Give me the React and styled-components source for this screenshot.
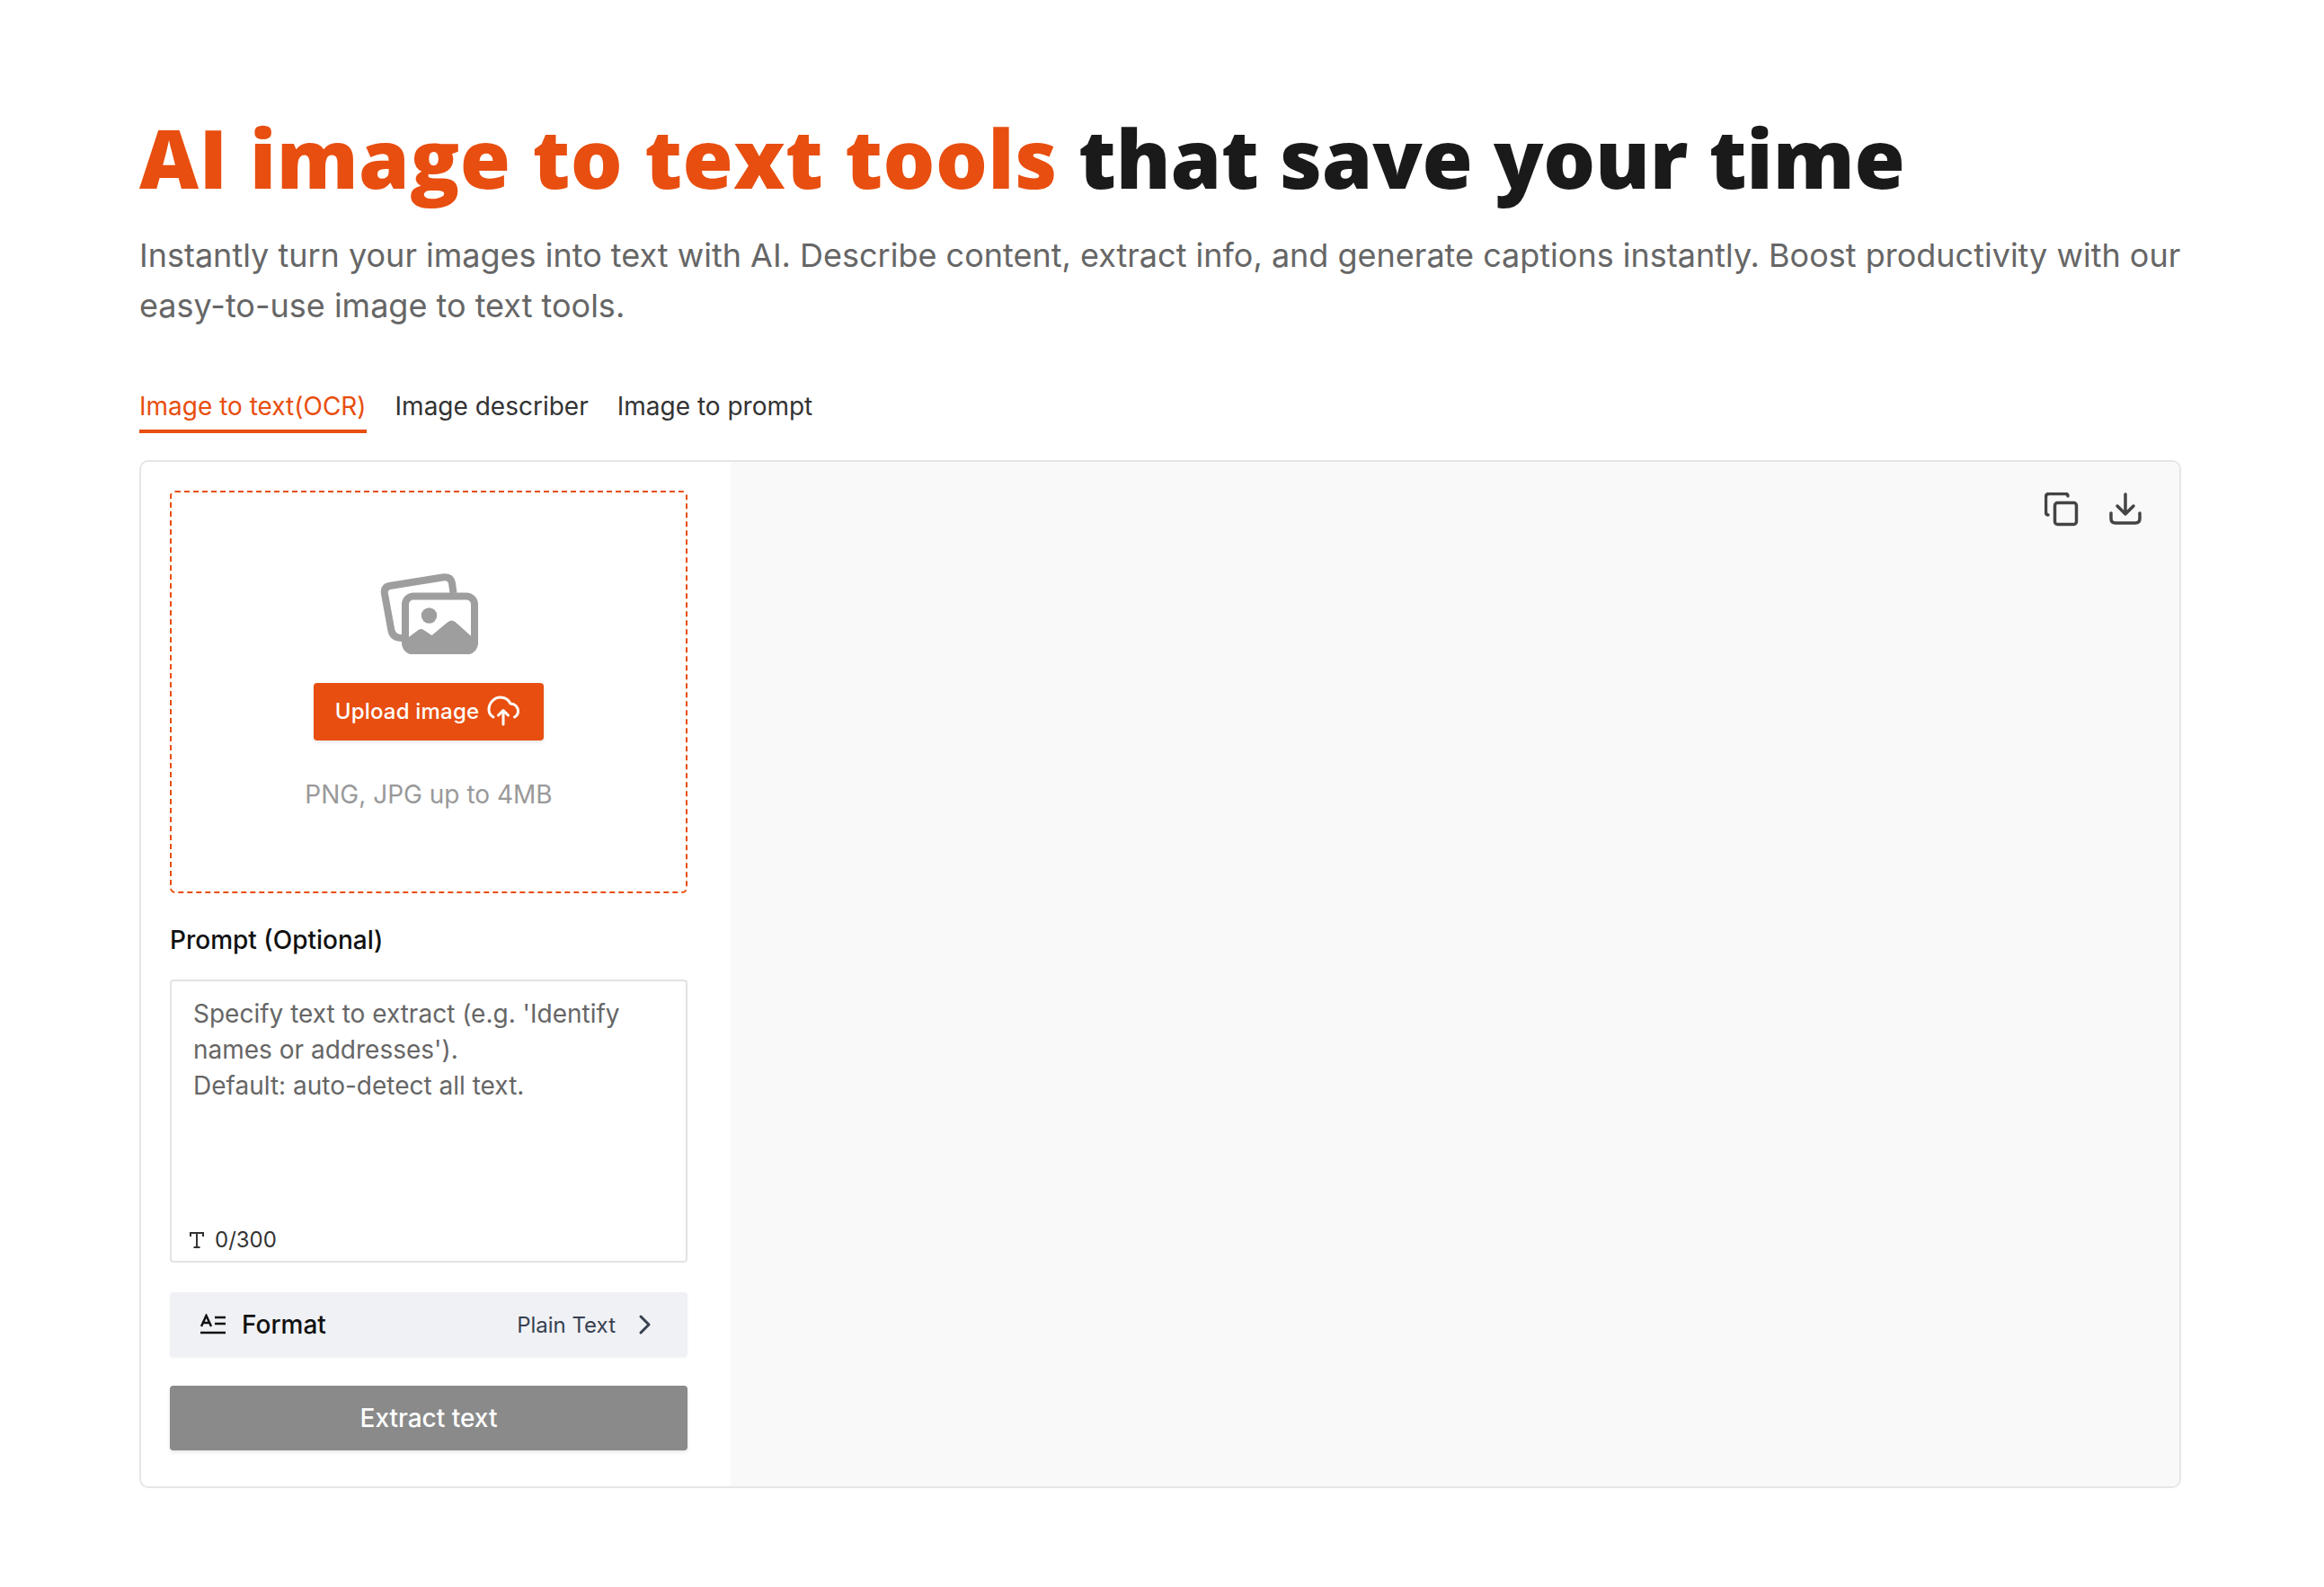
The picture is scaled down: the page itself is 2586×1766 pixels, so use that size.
import styled, { createGlobalStyle } from 'styled-components'

const orange = '#e84e0f'

const GlobalStyle = createGlobalStyle`
    * { box-sizing: border-box; }
    html, body { margin: 0; background: #fff; }
    body { font-family: Inter, "Liberation Sans", sans-serif; }
`

const Page = styled.main`
    padding: 123px 159px 0 155px;
`

const Title = styled.h1`
    margin: 0;
    font-family: "Open Sans", Inter, sans-serif;
    font-size: 91px;
    line-height: 105px;
    letter-spacing: -0.23px;
    font-weight: 800;
    color: #1a1a1a;
    white-space: nowrap;
`

const Accent = styled.span`
    letter-spacing: 0.42px;
    color: ${orange};
`

const Lead = styled.p`
    margin: 28px 0 0;
    font-size: 36px;
    line-height: 56px;
    color: #666;
`

const Tabs = styled.nav`
    display: flex;
    gap: 32px;
    margin-top: 63px;
`

const Tab = styled.button`
    padding: 0 0 5px;
    border: none;
    border-bottom: 4px solid ${(p) => (p.$active ? orange : 'transparent')};
    background: none;
    font-family: inherit;
    font-size: 28px;
    line-height: 42px;
    color: ${(p) => (p.$active ? orange : '#333')};
`

const Panel = styled.section`
    display: flex;
    height: 1144px;
    margin-top: 30px;
    border: 2px solid #e6e6e6;
    border-radius: 10px;
    overflow: hidden;
`

const Sidebar = styled.div`
    flex: 0 0 656px;
    display: flex;
    flex-direction: column;
    padding: 32px 48px 0 32px;
`

const DropZone = styled.div`
    height: 448px;
    display: flex;
    flex-direction: column;
    align-items: center;
    padding-top: 90px;
    border: 2px dashed ${orange};
    border-radius: 6px;
`

const UploadButton = styled.button`
    display: flex;
    align-items: center;
    justify-content: center;
    gap: 9px;
    width: 256px;
    height: 64px;
    margin-top: 32px;
    padding: 0 3px 2px 0;
    border: none;
    border-radius: 4px;
    background: ${orange};
    box-shadow: 0 2px 4px rgba(0, 0, 0, 0.1);
    font-family: inherit;
    font-size: 24px;
    letter-spacing: 0.2px;
    font-weight: 500;
    color: #fff;
`

const Hint = styled.div`
    margin-top: 40px;
    font-size: 28px;
    line-height: 40px;
    color: #999;
`

const Label = styled.label`
    margin-top: 32px;
    font-size: 28px;
    line-height: 40px;
    font-weight: 500;
    color: #111;
`

const PromptBox = styled.div`
    position: relative;
    height: 315px;
    margin-top: 24px;
    border: 2px solid #e3e3e3;
    border-radius: 4px;
`

const PromptInput = styled.textarea`
    display: block;
    width: 100%;
    height: 100%;
    padding: 16px 24px;
    border: none;
    outline: none;
    resize: none;
    background: transparent;
    font-family: inherit;
    font-size: 28px;
    line-height: 40px;

    &::placeholder {
        color: #666;
        opacity: 1;
    }
`

const Counter = styled.div`
    position: absolute;
    left: 19px;
    bottom: 8px;
    display: flex;
    align-items: center;
    gap: 11px;
    font-size: 24px;
    line-height: 30px;
    color: #333;
`

const FormatRow = styled.div`
    display: flex;
    align-items: center;
    height: 72px;
    margin-top: 33px;
    padding: 0 39px 0 34px;
    border-radius: 4px;
    background: #f0f1f5;
    box-shadow: 0 1px 3px rgba(0, 0, 0, 0.05);
`

const FormatName = styled.span`
    margin-left: 18px;
    font-size: 28px;
    font-weight: 500;
    color: #111;
`

const FormatValue = styled.span`
    margin-left: auto;
    font-size: 24px;
    color: #374151;
`

const ExtractButton = styled.button`
    height: 72px;
    margin-top: 32px;
    border: none;
    border-radius: 4px;
    background: #8a8a8a;
    box-shadow: 0 2px 4px rgba(0, 0, 0, 0.1);
    font-family: inherit;
    font-size: 28px;
    font-weight: 500;
    color: #fff;
`

const Result = styled.div`
    flex: 1;
    display: flex;
    justify-content: flex-end;
    align-items: flex-start;
    gap: 34px;
    padding: 34px 42px 0 0;
    background: #f9f9fa;
`

const IconButton = styled.button`
    display: flex;
    padding: 0;
    border: none;
    background: none;
    color: #444;
`

const PicturesIcon = () => (
    <svg width="109" height="90" viewBox="0 0 108 90" fill="none">
        <path d="M81 22L79.500 11Q78 3 69 4.500L10 14Q3 15.500 4.500 23L12 64Q14 72 24 72" stroke="#9e9e9e" strokeWidth="8" />
        <rect x="27.500" y="25.500" width="77" height="61" rx="9" stroke="#9e9e9e" strokeWidth="8" />
        <circle cx="54" cy="47" r="8.700" fill="#9e9e9e" />
        <path d="M30 72L42 63Q45 61 48 63L57 69L75 54Q79 51 83 54L103 72V80Q103 87 96 87H37Q30 87 30 80Z" fill="#9e9e9e" />
    </svg>
)

const CloudUploadIcon = () => (
    <svg width="36" height="34" viewBox="0 0 36 34" fill="none" stroke="#fff" strokeWidth="3" strokeLinecap="round" strokeLinejoin="round">
        <path d="M7 24C3.500 22 2 19 2 15.500C2 8 8 2 15 2C20 2 24 5 26 9C31 9 34.500 13 34.500 17.500C34.500 20.500 33 22.500 30.500 24" />
        <path d="M18 32V17M12.500 22L18 16.500L23.500 22" />
    </svg>
)

const SerifTIcon = () => (
    <svg width="18" height="20" viewBox="0 0 18 20" fill="none" stroke="#333" strokeWidth="2">
        <path d="M2 6V2H16V6M9 2V18M5.500 18H12.500" />
    </svg>
)

const FormatIcon = () => (
    <svg width="28" height="24" viewBox="0 0 28 24" fill="none" stroke="#111" strokeWidth="2.500">
        <path d="M1 14L6.500 2L12 14M3 10H10M16 4H28M16 11H28M0 21H28" />
    </svg>
)

const ChevronIcon = () => (
    <svg width="16" height="24" viewBox="0 0 16 24" fill="none" stroke="#374151" strokeWidth="3" strokeLinecap="round" strokeLinejoin="round" style={{ marginLeft: 25 }}>
        <path d="M3 3L12 12L3 21" />
    </svg>
)

const CopyIcon = () => (
    <svg width="38" height="38" viewBox="0 0 38 38" fill="none" stroke="currentColor" strokeWidth="3.500" strokeLinecap="round" strokeLinejoin="round">
        <rect x="11.500" y="11.500" width="24" height="24" rx="3" />
        <path d="M4 25Q1.500 25 1.500 21.500V5Q1.500 1.500 5 1.500H23Q26 1.500 26 4" />
    </svg>
)

const DownloadIcon = () => (
    <svg width="36" height="36" viewBox="0 0 36 36" fill="none" stroke="currentColor" strokeWidth="3.500" strokeLinecap="round" strokeLinejoin="round">
        <path d="M18 2V23M9 15L18 24L27 15" />
        <path d="M2 23V29Q2 34 7 34H29Q34 34 34 29V23" />
    </svg>
)

const App = () => {
    return (
        <>
            <GlobalStyle />
            <Page>
                <Title>
                    <Accent>AI image to text tools</Accent> that save your time
                </Title>
                <Lead>
                    Instantly turn your images into text with AI. Describe content, extract info, and generate captions instantly. Boost productivity with our easy-to-use image to text tools.
                </Lead>
                <Tabs>
                    <Tab $active>Image to text(OCR)</Tab>
                    <Tab>Image describer</Tab>
                    <Tab>Image to prompt</Tab>
                </Tabs>
                <Panel>
                    <Sidebar>
                        <DropZone>
                            <PicturesIcon />
                            <UploadButton>
                                Upload image
                                <CloudUploadIcon />
                            </UploadButton>
                            <Hint>PNG, JPG up to 4MB</Hint>
                        </DropZone>
                        <Label>Prompt (Optional)</Label>
                        <PromptBox>
                            <PromptInput placeholder={"Specify text to extract (e.g. 'Identify names or addresses').\nDefault: auto-detect all text."} />
                            <Counter>
                                <SerifTIcon />
                                0/300
                            </Counter>
                        </PromptBox>
                        <FormatRow>
                            <FormatIcon />
                            <FormatName>Format</FormatName>
                            <FormatValue>Plain Text</FormatValue>
                            <ChevronIcon />
                        </FormatRow>
                        <ExtractButton>Extract text</ExtractButton>
                    </Sidebar>
                    <Result>
                        <IconButton aria-label="Copy">
                            <CopyIcon />
                        </IconButton>
                        <IconButton aria-label="Download">
                            <DownloadIcon />
                        </IconButton>
                    </Result>
                </Panel>
            </Page>
        </>
    )
}

export default App
